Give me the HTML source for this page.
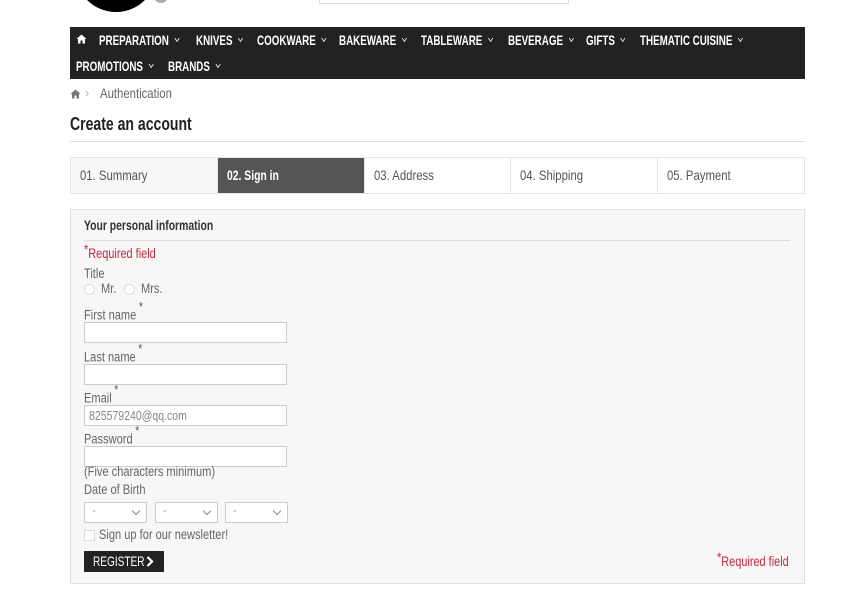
<!DOCTYPE html>
<html><head><meta charset="utf-8"><style>
*{margin:0;padding:0;box-sizing:border-box}
body{width:860px;height:608px;background:#fff;position:relative;overflow:hidden;font-family:"Liberation Sans",sans-serif;color:#555;font-size:12px}
.a{position:absolute}
.c{display:inline-block;transform:scaleX(.81);transform-origin:0 0;white-space:nowrap}
.nav{left:70px;top:27px;width:735px;height:52px;background:#222;color:#fff;font-weight:bold;font-size:14px}
.nav span{position:absolute;white-space:nowrap;transform:scaleX(.7);transform-origin:0 0}
.nav i{display:inline-block;width:5px;height:5px;border-right:1.5px solid #fff;border-bottom:1.5px solid #fff;transform:rotate(45deg);margin-left:9px;position:relative;top:-4px}
.steps{left:70px;top:157px;width:735px;height:37px;border:1px solid #e5e5e5;display:flex}
.steps div{flex:1;border-right:1px solid #e5e5e5;padding:9px 9px;font-size:14px;color:#555}
.steps div:last-child{border-right:0}
.box{left:70px;top:209px;width:735px;height:375px;background:#f7f7f7;border:1px solid #e0e0e0}
.inp{position:absolute;left:84px;width:203px;height:21px;background:#fff;border:1px solid #ccc}
.lbl{position:absolute;left:84px;font-size:13.5px;color:#666;transform:scaleX(.82);transform-origin:0 0;white-space:nowrap}
.lbl sup{font-size:13px;color:#555;position:relative;top:-3px;margin-left:3px}
.sel{position:absolute;top:502px;width:63px;height:21px;background:#fff;border:1px solid #ccc;font-size:11px;color:#999;padding:2px 7px}
.sel:after{content:"";position:absolute;right:7px;top:5px;width:5px;height:5px;border-right:1px solid #888;border-bottom:1px solid #888;transform:rotate(45deg)}
.rad{position:absolute;width:11px;height:11px;border:1px solid #ddd;border-radius:50%;background:#fff;top:284px}
</style></head><body>
<div class="a" style="left:75px;top:-70px;width:82px;height:82px;border-radius:50%;background:#000"></div>
<div class="a" style="left:155px;top:-6px;width:12px;height:9px;border-radius:50%;background:#aaa"></div>
<div class="a" style="left:319px;top:-2px;width:250px;height:6px;border:1px solid #ddd"></div>
<div class="a nav">
<svg class="a" style="left:6px;top:7px" width="11" height="10" viewBox="0 0 11 10"><path d="M5.5 0.5 L0.5 5 H2 V9.5 H4.5 V6.5 H6.5 V9.5 H9 V5 H10.5 Z" fill="#fff"/></svg>
<span style="left:29px;top:5px">PREPARATION<i></i></span>
<span style="left:126px;top:5px">KNIVES<i></i></span>
<span style="left:187px;top:5px">COOKWARE<i></i></span>
<span style="left:269px;top:5px">BAKEWARE<i></i></span>
<span style="left:351px;top:5px">TABLEWARE<i></i></span>
<span style="left:438px;top:5px">BEVERAGE<i></i></span>
<span style="left:516px;top:5px">GIFTS<i></i></span>
<span style="left:570px;top:5px">THEMATIC CUISINE<i></i></span>
<span style="left:6px;top:31px">PROMOTIONS<i></i></span>
<span style="left:98px;top:31px">BRANDS<i></i></span>
</div>
<svg class="a" style="left:70px;top:89px" width="11" height="10" viewBox="0 0 11 10"><path d="M5.5 0.5 L0.5 5 H2 V9.5 H4.5 V6.5 H6.5 V9.5 H9 V5 H10.5 Z" fill="#777"/></svg>
<div class="a" style="left:85px;top:85px;font-size:13px;color:#bbb">›</div>
<div class="a" style="left:100px;top:85px;font-size:14px;color:#666"><span class="c">Authentication</span></div>
<div class="a" style="left:70px;top:114px;font-size:18px;font-weight:bold;color:#222"><span class="c" style="transform:scaleX(.78)">Create an account</span></div>
<div class="a" style="left:70px;top:141px;width:735px;height:1px;background:#ddd"></div>
<div class="a steps"><div style="background:#f7f7f7"><span class="c">01. Summary</span></div><div style="background:#555;color:#fff;font-weight:bold"><span class="c" style="transform:scaleX(.74)">02. Sign in</span></div><div><span class="c">03. Address</span></div><div><span class="c">04. Shipping</span></div><div><span class="c">05. Payment</span></div></div>
<div class="a box"></div>
<div class="a" style="left:84px;top:218px;font-size:13.5px;font-weight:bold;color:#333"><span class="c" style="transform:scaleX(.77)">Your personal information</span></div>
<div class="a" style="left:84px;top:240px;width:706px;height:1px;background:#ddd"></div>
<div class="a" style="left:84px;top:246px;color:#c4283c;font-size:13.5px"><span class="c"><span style="position:relative;top:-4px">*</span>Required field</span></div>
<div class="lbl" style="top:266px">Title</div>
<div class="rad" style="left:84px"></div><div class="lbl" style="left:101px;top:281px">Mr.</div>
<div class="rad" style="left:124px"></div><div class="lbl" style="left:141px;top:281px">Mrs.</div>
<div class="lbl" style="top:302px">First name<sup>*</sup></div>
<div class="inp" style="top:322px"></div>
<div class="lbl" style="top:344px">Last name<sup>*</sup></div>
<div class="inp" style="top:364px"></div>
<div class="lbl" style="top:385px">Email<sup>*</sup></div>
<div class="inp" style="top:405px;font-size:13px;color:#888;padding:2px 4px"><span class="c">825579240@qq.com</span></div>
<div class="lbl" style="top:426px">Password<sup>*</sup></div>
<div class="inp" style="top:446px"></div>
<div class="lbl" style="top:464px">(Five characters minimum)</div>
<div class="lbl" style="top:482px">Date of Birth</div>
<div class="sel" style="left:84px">-</div><div class="sel" style="left:155px">-</div><div class="sel" style="left:225px">-</div>
<div class="a" style="left:84px;top:530px;width:11px;height:11px;border:1px solid #ddd;background:#fff"></div>
<div class="lbl" style="left:99px;top:527px">Sign up for our newsletter!</div>
<div class="a" style="left:84px;top:551px;width:80px;height:21px;background:#222;color:#fff;font-size:14px;padding:2px 9px"><span class="c" style="transform:scaleX(.72)">REGISTER</span></div>
<svg class="a" style="left:146px;top:556px" width="8" height="11" viewBox="0 0 8 11"><path d="M1.5 1 L6 5.5 L1.5 10" stroke="#fff" stroke-width="2.2" fill="none"/></svg>
<div class="a" style="left:717px;top:554px;color:#c4283c;font-size:13.5px"><span class="c"><span style="position:relative;top:-4px">*</span>Required field</span></div>
</body></html>
